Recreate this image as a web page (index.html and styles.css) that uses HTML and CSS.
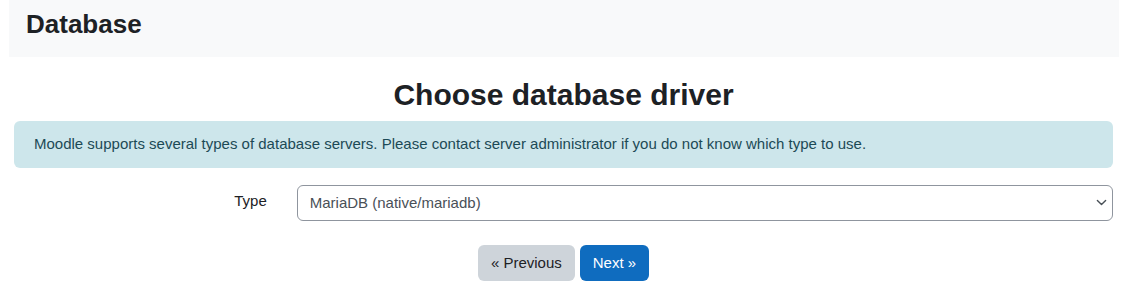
FILE: index.html
```html
<!DOCTYPE html>
<html lang="en">
<head>
    <meta charset="UTF-8">
    <meta name="viewport" content="width=device-width, initial-scale=1.0">
    <title>Installation - Database</title>
    <link rel="stylesheet" href="styles.css">
</head>
<body>
    <div class="page-header">
        <h1>Database</h1>
    </div>
    <div class="content">
        <h2>Choose database driver</h2>
        <div class="alert alert-info">
            Moodle supports several types of database servers. Please contact server administrator if you do not know which type to use.
        </div>
        <div class="form-row">
            <label class="col-label" for="dbtype">Type</label>
            <div class="col-field">
                <select id="dbtype" class="custom-select">
                    <option value="mariadb" selected>MariaDB (native/mariadb)</option>
                    <option value="mysqli">MySQL (native/mysqli)</option>
                    <option value="pgsql">PostgreSQL (native/pgsql)</option>
                    <option value="sqlsrv">Microsoft SQL Server (native/sqlsrv)</option>
                </select>
            </div>
        </div>
        <div class="buttons">
            <button class="btn btn-secondary">&laquo; Previous</button>
            <button class="btn btn-primary">Next &raquo;</button>
        </div>
    </div>
</body>
</html>
```

FILE: styles.css
```css
body {
    margin: 0;
    background: #fff;
    color: #1d2125;
    font-family: "Liberation Sans", Arial, sans-serif;
    font-size: 15px;
    line-height: 1.5;
}
.page-header {
    margin: 0 14px 0 9px;
    padding: 9px 17px 17px 17px;
    background: #f8f9fa;
}
.page-header h1 {
    margin: 0;
    font-size: 26px;
    font-weight: 700;
    line-height: 1.2;
}
.content {
    margin: 0 20px 0 14px;
}
.content h2 {
    margin: 20px 0 8px 0;
    font-size: 30px;
    font-weight: 700;
    line-height: 1.2;
    text-align: center;
}
.alert {
    padding: 12px 20px;
    margin-bottom: 17px;
    border-radius: 6px;
}
.alert-info {
    background: #cde6eb;
    color: #1c4a56;
}
.form-row {
    display: flex;
    gap: 30px;
}
.col-label {
    flex: 0 0 calc(25% - 22px);
    text-align: right;
    padding-top: 5px;
}
.col-field {
    flex: 1;
}
.custom-select {
    display: block;
    width: 100%;
    height: 36px;
    padding: 6px 30px 6px 12px;
    font-family: inherit;
    font-size: 15px;
    color: #495057;
    background: #fff url("data:image/svg+xml,%3csvg xmlns='http://www.w3.org/2000/svg' viewBox='0 0 16 16'%3e%3cpath fill='none' stroke='%23495057' stroke-linecap='round' stroke-linejoin='round' stroke-width='2' d='M2 5l6 6 6-6'/%3e%3c/svg%3e") no-repeat right 5px center;
    background-size: 11px 11px;
    border: 1px solid #8f959e;
    border-radius: 6px;
    appearance: none;
}
.buttons {
    display: flex;
    justify-content: center;
    gap: 5px;
    margin-top: 24px;
}
.btn {
    padding: 6px 12px;
    font-family: inherit;
    font-size: 15px;
    line-height: 1.5;
    border: 1px solid transparent;
    border-radius: 6px;
    cursor: pointer;
}
.btn-secondary {
    background: #ced4da;
    color: #1d2125;
}
.btn-primary {
    background: #0f6cbf;
    color: #fff;
}
```
